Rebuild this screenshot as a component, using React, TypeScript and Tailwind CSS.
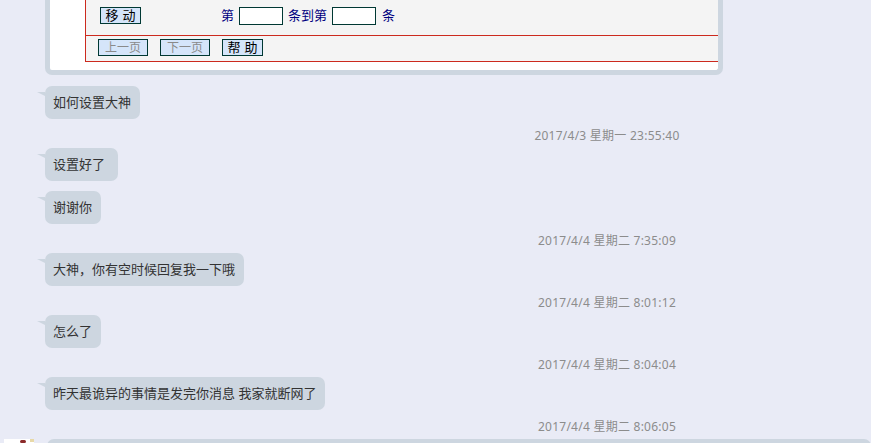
const cjk = "font-['Noto_Sans','Noto_Sans_CJK_SC',sans-serif]";

const Bubble = ({ text, extra }: { text: string; extra?: string }) => (
  <div className="flex mb-[10px]">
    <div
      className={`relative flex items-center h-[33px] rounded-[7px] bg-[#cdd6e0] pl-[8px] pr-[9px] text-[13px] text-[#333] whitespace-nowrap ${extra ?? ""}`}
    >
      <span className="absolute left-[-8px] top-[6px] w-0 h-0 border-t-[4px] border-t-[#cdd6e0] border-l-[8px] border-l-transparent" />
      {text}
    </div>
  </div>
);

const Stamp = ({ text }: { text: string }) => (
  <div className="ml-[422px] w-[280px] text-center text-[12px] tracking-[0.25px] leading-[14px] text-[#8c8c8c] mb-[5px]">
    {text}
  </div>
);

const Btn = ({ label, w, dim, spaced }: { label: string; w: string; dim?: boolean; spaced?: boolean }) => (
  <div
    className={`flex items-center justify-center h-[17px] ${w} bg-[#d5e5fa] border border-[#003833] leading-none ${
      dim ? "text-[#8a8a8a] text-[12px]" : "text-black"
    } ${spaced ? "text-[13px] tracking-[4px] pl-[4px]" : ""}`}
  >
    {label}
  </div>
);

export default function App() {
  return (
    <div className={`w-[871px] h-[443px] overflow-hidden bg-[#e9ebf6] ${cjk}`}>
      {/* scrolled-off search panel */}
      <div className="ml-[45px] w-[678px] rounded-b-[7px] border-x-[5px] border-b-[5px] border-[#cdd6e0] bg-white pb-[8px] overflow-hidden mb-[11px]">
        <div className="ml-[35px] w-[720px] border-l border-[#cc2a1e] bg-[#f4f4f4]">
          <div className="h-[36px] border-b border-[#cc2a1e] flex items-start pt-[7px] pl-[14px] text-[13px] text-[#000080]">
            <Btn label="移动" w="w-[41px]" spaced />
            <span className="ml-[80px] leading-[17px]">第</span>
            <div className="ml-[5px] w-[44px] h-[18px] bg-white border border-[#003833]" />
            <span className="ml-[5px] leading-[17px]">条到第</span>
            <div className="ml-[5px] w-[44px] h-[18px] bg-white border border-[#003833]" />
            <span className="ml-[6px] leading-[17px]">条</span>
          </div>
          <div className="h-[26px] border-b border-[#cc2a1e] flex items-start pt-[3px] pl-[12px] gap-[12px]">
            <Btn label="上一页" w="w-[50px]" dim />
            <Btn label="下一页" w="w-[50px]" dim />
            <Btn label="帮助" w="w-[41px]" spaced />
          </div>
        </div>
      </div>

      <div className="pl-[45px]">
        <Bubble text="如何设置大神" />
        <Stamp text="2017/4/3 星期一 23:55:40" />
        <Bubble text="设置好了" extra="pr-[13px]" />
        <Bubble text="谢谢你" />
        <Stamp text="2017/4/4 星期二 7:35:09" />
        <Bubble text="大神，你有空时候回复我一下哦" />
        <Stamp text="2017/4/4 星期二 8:01:12" />
        <Bubble text="怎么了" />
        <Stamp text="2017/4/4 星期二 8:04:04" />
        <Bubble text="昨天最诡异的事情是发完你消息 我家就断网了" />
        <Stamp text="2017/4/4 星期二 8:06:05" />
      </div>

      <div className="flex items-start">
        <div className="ml-[4px] w-[30px] h-[30px] bg-white relative">
          <span className="absolute left-[16px] top-[1px] w-[6px] h-[3px] bg-[#8b2a2a] rounded-full" />
          <span className="absolute left-[26px] top-0 w-[4px] h-[3px] bg-[#e8d9a8]" />
        </div>
        <div className="ml-[13px] flex-1 h-[40px] rounded-[7px] bg-[#cdd6e0]" />
      </div>
    </div>
  );
}
